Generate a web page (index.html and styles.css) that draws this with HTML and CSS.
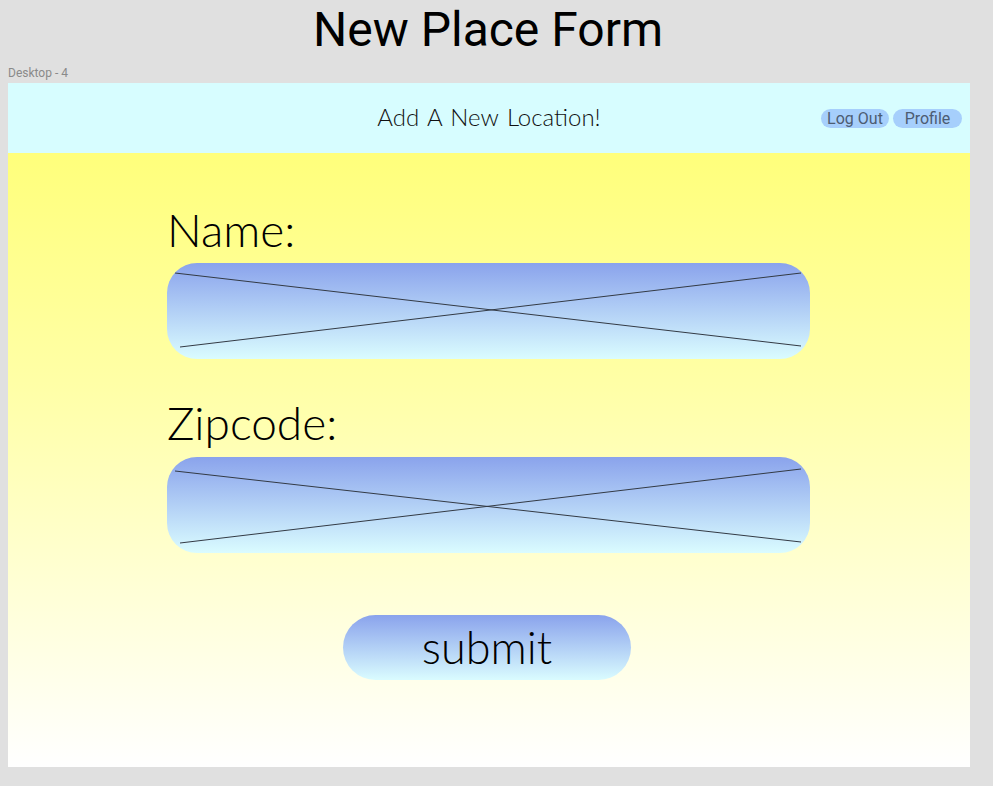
FILE: index.html
```html
<!DOCTYPE html>
<html>
<head>
<meta charset="utf-8">
<link rel="stylesheet" href="styles.css">
</head>
<body>
<h1 class="title">New Place Form</h1>
<div class="frame-label">Desktop - 4</div>
<div class="frame">
  <header class="topbar">
    <div></div>
    <div class="topbar-title">Add A New Location!</div>
    <div class="topbar-actions">
      <button class="pill">Log Out</button>
      <button class="pill">Profile</button>
    </div>
  </header>
  <main class="content">
    <div class="form">
      <label class="field-label field-label-first">Name:</label>
      <div class="field-box">
        <svg class="placeholder" viewBox="0 0 643 96" preserveAspectRatio="none">
          <line x1="8" y1="10" x2="634" y2="83"/>
          <line x1="13" y1="84" x2="634" y2="10"/>
        </svg>
      </div>
      <label class="field-label field-label-second">Zipcode:</label>
      <div class="field-box">
        <svg class="placeholder" viewBox="0 0 643 96" preserveAspectRatio="none">
          <line x1="8" y1="14" x2="634" y2="85"/>
          <line x1="13" y1="86" x2="634" y2="12"/>
        </svg>
      </div>
      <button class="submit">submit</button>
    </div>
  </main>
</div>
</body>
</html>
```
FILE: styles.css
```css
html, body {
  margin: 0;
  padding: 0;
}
body {
  background: #e0e0e0;
  width: 993px;
  height: 786px;
  overflow: hidden;
  font-family: Roboto, "Liberation Sans", sans-serif;
}
.title {
  margin: 0;
  width: 976px;
  height: 60px;
  line-height: 60px;
  font-size: 48px;
  font-weight: 400;
  text-align: center;
  color: #000;
}
.frame-label {
  font-size: 12px;
  line-height: 13px;
  padding: 7px 0 3px 8px;
  color: #8a8a8a;
}
.frame {
  margin-left: 8px;
  width: 962px;
  height: 684px;
  display: flex;
  flex-direction: column;
  background: linear-gradient(to bottom, #ffff6e 0%, #ffffa8 45%, #ffffff 100%);
}
.topbar {
  height: 70px;
  flex: none;
  background: #d7fdff;
  display: grid;
  grid-template-columns: 1fr auto 1fr;
  align-items: center;
}
.topbar-title {
  font-family: Lato, "Open Sans", sans-serif;
  font-weight: 300;
  font-size: 24px;
  word-spacing: 2px;
  letter-spacing: 0;
  color: #111;
  padding-bottom: 3px;
}
.topbar-actions {
  display: flex;
  justify-content: flex-end;
  gap: 4px;
  padding-right: 8px;
}
.pill {
  border: none;
  background: #a6cffc;
  color: #4d5c72;
  font-family: Roboto, "Liberation Sans", sans-serif;
  font-size: 16px;
  line-height: 19px;
  height: 19px;
  padding: 0;
  width: 68px;
  border-radius: 10px;
}
.pill + .pill {
  width: 69px;
}
.content {
  flex: 1;
  padding-left: 159px;
}
.form {
  width: 643px;
  display: flex;
  flex-direction: column;
}
.field-label {
  font-family: Lato, "Open Sans", sans-serif;
  font-weight: 300;
  font-size: 46px;
  line-height: 48px;
  color: #000;
  letter-spacing: 0;
}
.field-label-first {
  margin: 53px 0 9px;
}
.field-label-second {
  margin: 40px 0 10px;
}
.field-box {
  height: 96px;
  border-radius: 30px;
  background: linear-gradient(to bottom, #8aa3ec 0%, #dafcff 100%);
  overflow: hidden;
}
.placeholder {
  display: block;
  width: 100%;
  height: 100%;
}
.placeholder line {
  stroke: #333a44;
  stroke-width: 1;
}
.submit {
  margin: 62px 0 0 176px;
  width: 288px;
  height: 65px;
  border: none;
  border-radius: 33px;
  background: linear-gradient(to bottom, #8aa3ec 0%, #dafcff 100%);
  font-family: Lato, "Open Sans", sans-serif;
  font-weight: 300;
  font-size: 45px;
  line-height: 60px;
  padding: 0 0 2px;
  color: #000;
  letter-spacing: 0;
}
```
